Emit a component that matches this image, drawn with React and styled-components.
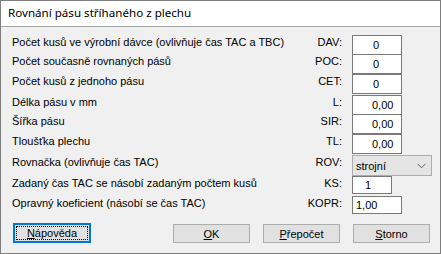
import React from "react";
import styled, { createGlobalStyle } from "styled-components";

const Global = createGlobalStyle`
  html, body { margin: 0; padding: 0; background: #ffffff; }
  * { box-sizing: border-box; }
`;

const Window = styled.div`
  width: 441px;
  height: 254px;
  border: 1px solid #7d7d7d;
  display: flex;
  flex-direction: column;
  background: #f0f0f0;
  font-family: "Liberation Sans", Arial, sans-serif;
  font-size: 11px;
  color: #000;
`;

const TitleBar = styled.div`
  height: 26px;
  flex: none;
  background: #ffffff;
  border-bottom: 1px solid #a5a5a5;
  display: flex;
  align-items: center;
  padding: 0 0 2px 7px;
  font-family: "Noto Sans", "Open Sans", sans-serif;
  font-size: 11.6px;
`;

const Body = styled.div`
  flex: 1;
  display: flex;
  flex-direction: column;
  padding: 8px 8px 0 11px;
`;

const Row = styled.div`
  display: flex;
  align-items: flex-start;
  height: ${(p) => p.h}px;
`;

const Label = styled.div`
  flex: 1;
  line-height: 14px;
  white-space: nowrap;
`;

const Code = styled.div`
  width: 50px;
  text-align: right;
  line-height: 14px;
  margin-right: 10px;
`;

const Field = styled.div`
  width: 80px;
  display: flex;
`;

const Input = styled.div`
  width: ${(p) => p.w}px;
  height: ${(p) => p.h}px;
  background: #ffffff;
  border: 1px solid #7a7a7a;
  display: flex;
  align-items: center;
  padding-left: ${(p) => p.pad}px;
  line-height: 13px;
`;

const Combo = styled.div`
  width: 80px;
  height: 21px;
  background: #e5e5e5;
  border: 1px solid #adadad;
  display: flex;
  align-items: center;
  justify-content: space-between;
  padding: 0 5px 0 3px;
`;

const ButtonBar = styled.div`
  display: flex;
  align-items: center;
  justify-content: space-between;
  margin-top: 10px;
  padding: 0 2px 0 1px;
`;

const Group = styled.div`
  display: flex;
  gap: 13px;
`;

const Button = styled.div`
  width: ${(p) => p.w}px;
  height: ${(p) => (p.focus ? 20 : 19)}px;
  background: #e1e1e1;
  border: 1px solid ${(p) => (p.focus ? "#0078d7" : "#adadad")};
  box-shadow: ${(p) => (p.focus ? "inset 0 0 0 1px #0078d7" : "none")};
  display: flex;
  align-items: center;
  justify-content: center;
  padding: ${(p) => (p.focus ? "2px" : "0")};
  margin-top: ${(p) => (p.focus ? "-1px" : "0")};
`;

const Focus = styled.span`
  flex: 1;
  align-self: stretch;
  border: 1px dotted #000;
  display: flex;
  align-items: center;
  justify-content: center;
`;

const Chevron = () => (
  <svg width="9" height="6" viewBox="0 0 9 6">
    <path d="M0.5 0.8 L4.5 4.8 L8.5 0.8" fill="none" stroke="#606060" strokeWidth="1" />
  </svg>
);

const rows = [
  { label: "Počet kusů ve výrobní dávce (ovlivňuje čas TAC a TBC)", code: "DAV:", value: "0", h: 19, pad: 20 },
  { label: "Počet současně rovnaných pásů", code: "POC:", value: "0", h: 20, pad: 20 },
  { label: "Počet kusů z jednoho pásu", code: "CET:", value: "0", h: 21, pad: 20 },
  { label: "Délka pásu v mm", code: "L:", value: "0,00", h: 19, pad: 19 },
  { label: "Šířka pásu", code: "SIR:", value: "0,00", h: 20, pad: 19 },
  { label: "Tloušťka plechu", code: "TL:", value: "0,00", h: 21, pad: 19 },
];

export default function App() {
  return (
    <>
      <Global />
      <Window>
        <TitleBar>Rovnání pásu stříhaného z plechu</TitleBar>
        <Body>
          {rows.map((r) => (
            <Row key={r.code} h={r.h}>
              <Label>{r.label}</Label>
              <Code>{r.code}</Code>
              <Field>
                <Input w={50} h={20} pad={r.pad}>{r.value}</Input>
              </Field>
            </Row>
          ))}
          <Row h={21}>
            <Label>Rovnačka (ovlivňuje čas TAC)</Label>
            <Code>ROV:</Code>
            <Field>
              <Combo>
                <span>strojní</span>
                <Chevron />
              </Combo>
            </Field>
          </Row>
          <Row h={20}>
            <Label>Zadaný čas TAC se násobí zadaným počtem kusů</Label>
            <Code>KS:</Code>
            <Field>
              <Input w={40} h={18} pad={12}>1</Input>
            </Field>
          </Row>
          <Row h={18}>
            <Label>Opravný koeficient (násobí se čas TAC)</Label>
            <Code>KOPR:</Code>
            <Field>
              <Input w={50} h={18} pad={3}>1,00</Input>
            </Field>
          </Row>
          <ButtonBar>
            <Button w={78} focus>
              <Focus><u>N</u>ápověda</Focus>
            </Button>
            <Group>
              <Button w={77}><span><u>O</u>K</span></Button>
              <Button w={77}><span><u>P</u>řepočet</span></Button>
              <Button w={77}><span><u>S</u>torno</span></Button>
            </Group>
          </ButtonBar>
        </Body>
      </Window>
    </>
  );
}
